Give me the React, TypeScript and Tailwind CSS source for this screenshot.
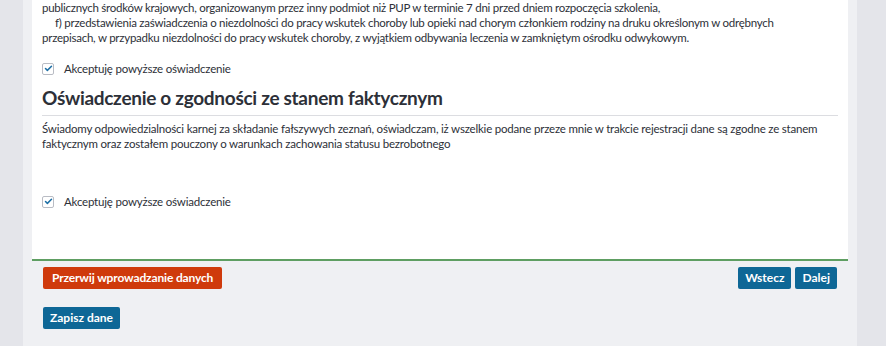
import { Check } from "lucide-react"

function Checkbox({ label }: { label: string }) {
    return (
        <label className="flex items-center gap-[10px] h-[15px]">
            <span className="w-[12px] h-[12px] border border-[#b9bcc4] rounded-[2px] bg-white flex items-center justify-center">
                <Check className="w-[9px] h-[9px] text-[#1d6fa5]" strokeWidth={4} />
            </span>
            <span className="text-[11.5px] leading-[15px] tracking-[-0.2px] text-[#2d3038]">{label}</span>
        </label>
    )
}

export default function App() {
    return (
        <div
            className="w-[886px] h-[346px] flex bg-[#e4e5ea] overflow-hidden"
            style={{ fontFamily: 'Lato, "Open Sans", sans-serif' }}
        >
            <div className="w-[23px] shrink-0" />
            <div className="w-[834px] shrink-0 bg-[#eff0f3] px-[9px]">
                {/* card */}
                <div className="bg-white border-b-2 border-[#5e9e62] px-[10px] h-[261px]">
                    <div className="text-[11.5px] leading-[15px] tracking-[-0.25px] text-[#2d3038] whitespace-nowrap">
                        <p>publicznych środków krajowych, organizowanym przez inny podmiot niż PUP w terminie 7 dni przed dniem rozpoczęcia szkolenia,</p>
                        <p className="pl-[13px]">f) przedstawienia zaświadczenia o niezdolności do pracy wskutek choroby lub opieki nad chorym członkiem rodziny na druku określonym w odrębnych</p>
                        <p>przepisach, w przypadku niezdolności do pracy wskutek choroby, z wyjątkiem odbywania leczenia w zamkniętym ośrodku odwykowym.</p>
                    </div>
                    <div className="mt-[16px]">
                        <Checkbox label="Akceptuję powyższe oświadczenie" />
                    </div>
                    <h2 className="mt-[8px] text-[19px] leading-[28px] font-bold tracking-[-0.3px] text-[#2d3038]">
                        Oświadczenie o zgodności ze stanem faktycznym
                    </h2>
                    <div className="mt-[3px] border-t border-[#dcdde1]" />
                    <div className="mt-[5px] text-[11.5px] leading-[15px] tracking-[-0.2px] text-[#2d3038] whitespace-nowrap">
                        <p>Świadomy odpowiedzialności karnej za składanie fałszywych zeznań, oświadczam, iż wszelkie podane przeze mnie w trakcie rejestracji dane są zgodne ze stanem</p>
                        <p>faktycznym oraz zostałem pouczony o warunkach zachowania statusu bezrobotnego</p>
                    </div>
                    <div className="mt-[43px]">
                        <Checkbox label="Akceptuję powyższe oświadczenie" />
                    </div>
                </div>
                <div className="flex justify-between mt-[6px] px-[11px]">
                    <button className="h-[22px] px-[9px] rounded-[2px] bg-[#cf3a0c] text-white text-[12px] font-bold tracking-[-0.15px]">
                        Przerwij wprowadzanie danych
                    </button>
                    <div className="flex gap-[4px]">
                        <button className="h-[22px] px-[7px] rounded-[2px] bg-[#0e6796] text-white text-[12px] font-bold">Wstecz</button>
                        <button className="h-[22px] px-[7px] rounded-[2px] bg-[#0e6796] text-white text-[12px] font-bold">Dalej</button>
                    </div>
                </div>
                <div className="mt-[15px] px-[11px]">
                    <button className="h-[22px] px-[7px] rounded-[2px] bg-[#0e6796] text-white text-[12px] font-bold">
                        Zapisz dane
                    </button>
                </div>
            </div>
        </div>
    )
}
